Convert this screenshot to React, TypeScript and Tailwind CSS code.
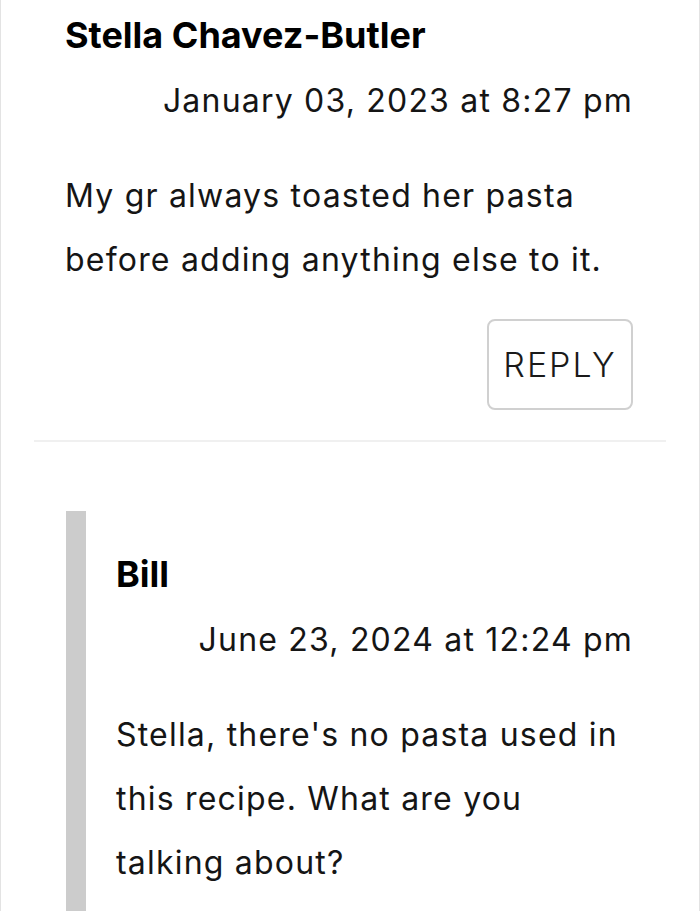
import React from 'react';

type CommentProps = {
    author: string;
    date: string;
    lines: string[];
};

function CommentBody({ author, date, lines }: CommentProps) {
    return (
        <div>
            <div className="text-[36px] font-bold leading-[44px] text-black">{author}</div>
            <div className="mt-[24px] text-right text-[32px] leading-[40px] tracking-[1.2px] text-[#151515]">{date}</div>
            <p className="mt-[43px] text-[32px] leading-[64px] tracking-[1.2px] text-[#151515]">
                {lines.map((l, i) => (
                    <span key={i} className="block">{l}</span>
                ))}
            </p>
        </div>
    );
}

export default function App() {
    return (
        <div
            className="w-[700px] h-[911px] overflow-hidden bg-white border-x border-[#e3e3e3]"
            style={{ fontFamily: 'Inter, "Liberation Sans", sans-serif' }}
        >
            <div className="pl-[64px] pr-[66px] pt-[13px]">
                <CommentBody
                    author="Stella Chavez-Butler"
                    date="January 03, 2023 at 8:27 pm"
                    lines={['My gr always toasted her pasta', 'before adding anything else to it.']}
                />
                <div className="mt-[27px] flex justify-end">
                    <button className="w-[146px] h-[91px] rounded-[8px] border-2 border-[#d0d0d0] bg-white text-[34px] font-light tracking-[2px] text-[#1a1a1a]">
                        REPLY
                    </button>
                </div>
            </div>
            <div className="mx-[33px] mt-[30px] h-[2px] bg-[#f0f0f0]" />
            <div className="ml-[65px] mt-[69px] flex">
                <div className="w-[20px] shrink-0 bg-[#cccccc] h-[420px]" />
                <div className="flex-1 pl-[30px] pr-[66px] pt-[41px]">
                    <CommentBody
                        author="Bill"
                        date="June 23, 2024 at 12:24 pm"
                        lines={["Stella, there's no pasta used in", 'this recipe. What are you', 'talking about?']}
                    />
                </div>
            </div>
        </div>
    );
}
